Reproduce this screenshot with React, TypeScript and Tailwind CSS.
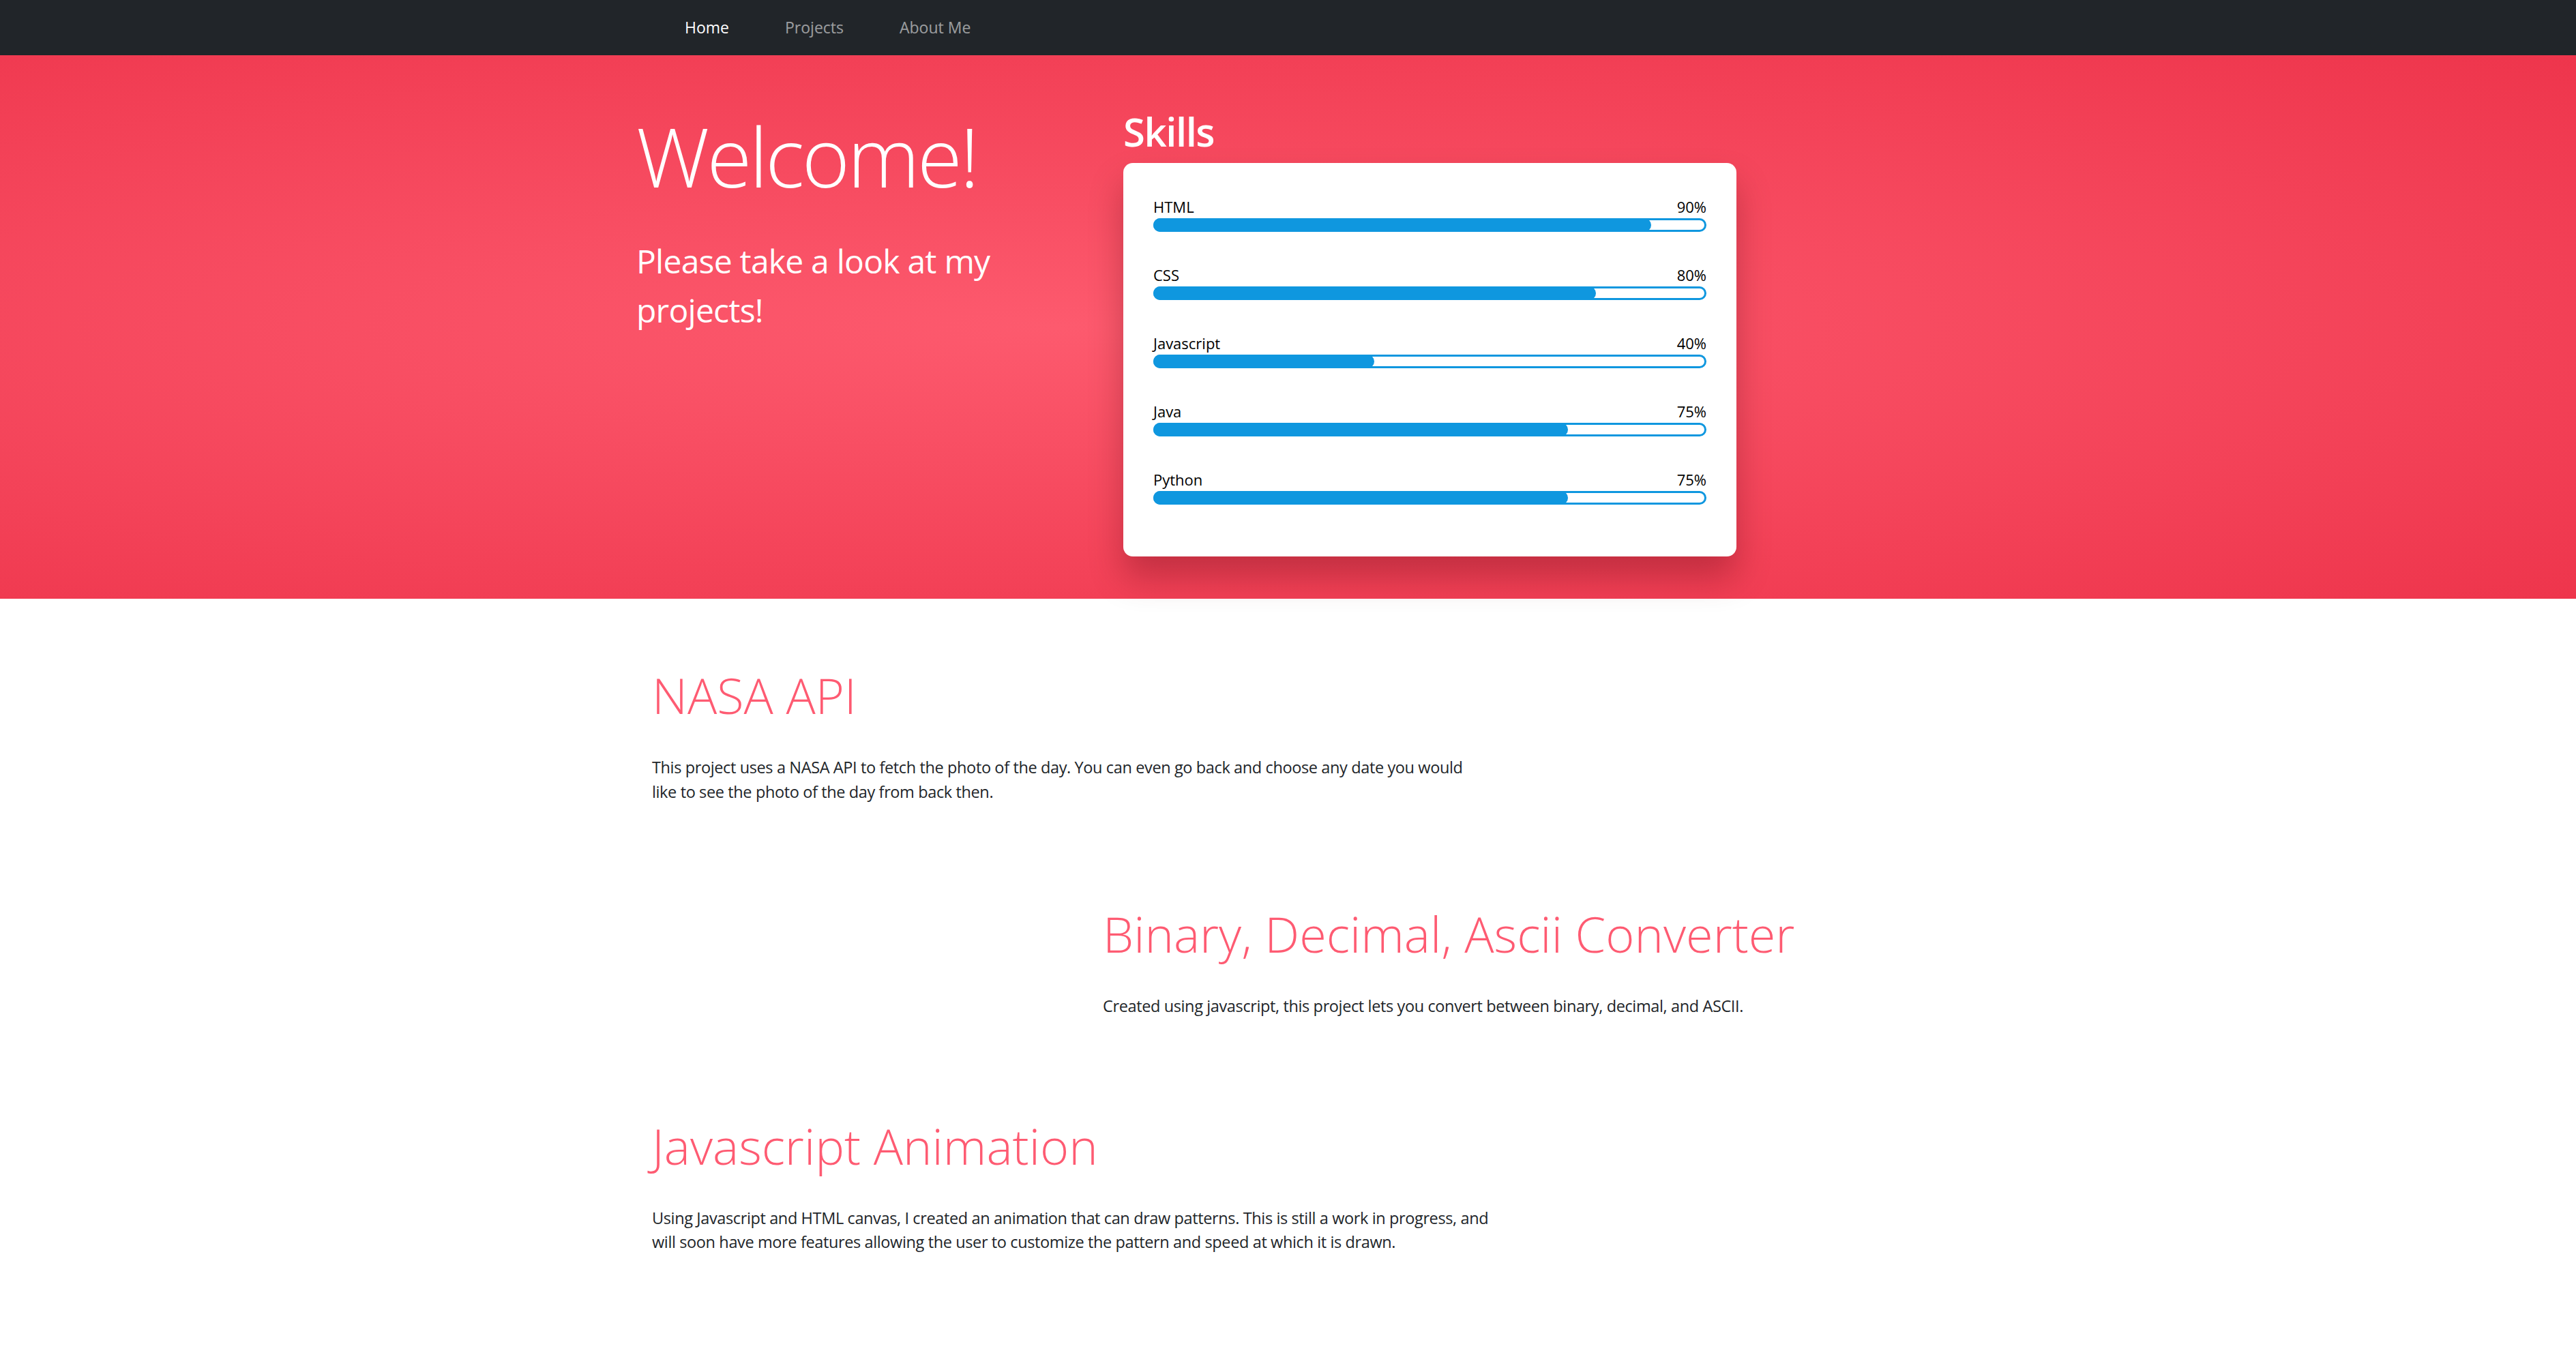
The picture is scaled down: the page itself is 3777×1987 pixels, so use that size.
import React from 'react';

const skills = [
  { name: 'HTML', pct: 90 },
  { name: 'CSS', pct: 80 },
  { name: 'Javascript', pct: 40 },
  { name: 'Java', pct: 75 },
  { name: 'Python', pct: 75 },
];

const SkillBar = ({ name, pct }: { name: string; pct: number }) => (
  <div>
    <div className="flex justify-between text-[22px] leading-[33px] text-black">
      <span>{name}</span>
      <span>{pct}%</span>
    </div>
    <div className="relative h-[20px]">
      <div className="absolute inset-0 rounded-full border-[3px] border-[#0f97df] bg-white" />
      <div className="absolute left-0 top-0 h-full rounded-full bg-[#0f97df]" style={{ width: `${pct}%` }} />
    </div>
  </div>
);

const Project = ({ title, text, shift }: { title: string; text: string; shift?: boolean }) => (
  <div className={shift ? 'ml-[661px] w-[1228px]' : 'w-[1228px]'}>
    <h2 className="text-[72px] font-light leading-[86px] text-[#fe5b72]">{title}</h2>
    <p className="mt-[46px] text-[23.5px] leading-[35.5px] tracking-[-0.016em] text-[#212529]">{text}</p>
  </div>
);

export default function App() {
  return (
    <div className="min-h-[1987px] bg-white font-['Open_Sans',sans-serif]">
      {/* navbar */}
      <nav className="flex h-[81px] items-center gap-[82px] bg-[#212529] pl-[1004px] text-[23px]">
        <a className="text-white">Home</a>
        <a className="text-white/55">Projects</a>
        <a className="text-white/55">About Me</a>
      </nav>

      {/* hero */}
      <section className="h-[797px] bg-[radial-gradient(ellipse_at_41%_50%,#fd5a6e_0%,#ee354c_100%)]">
        <div className="mx-auto flex w-[1911px] pt-[76px]">
          <div className="w-[714px] text-white">
            <h1 className="text-[120px] font-light leading-[144px] tracking-[-0.03em]">Welcome!</h1>
            <p className="mt-[46px] max-w-[620px] text-[48px] leading-[72px] tracking-[-0.016em]">
              Please take a look at my projects!
            </p>
          </div>
          <div className="w-[899px]">
            <h2 className="text-[58px] font-semibold leading-[72px] tracking-[-0.025em] text-white">Skills</h2>
            <div className="mt-[10px] flex h-[577px] flex-col gap-[47px] rounded-[14px] bg-white px-[44px] pt-[48px] shadow-[0_30px_50px_rgba(80,0,10,0.3)]">
              {skills.map((s) => (
                <SkillBar key={s.name} name={s.name} pct={s.pct} />
              ))}
            </div>
          </div>
        </div>
      </section>

      {/* projects */}
      <main className="mx-auto w-[1865px] pt-[98px]">
        <Project
          title="NASA API"
          text="This project uses a NASA API to fetch the photo of the day. You can even go back and choose any date you would like to see the photo of the day from back then."
        />
        <div className="mt-[147px]">
          <Project
            shift
            title="Binary, Decimal, Ascii Converter"
            text="Created using javascript, this project lets you convert between binary, decimal, and ASCII."
          />
        </div>
        <div className="mt-[143px]">
          <Project
            title="Javascript Animation"
            text="Using Javascript and HTML canvas, I created an animation that can draw patterns. This is still a work in progress, and will soon have more features allowing the user to customize the pattern and speed at which it is drawn."
          />
        </div>
      </main>
    </div>
  );
}
